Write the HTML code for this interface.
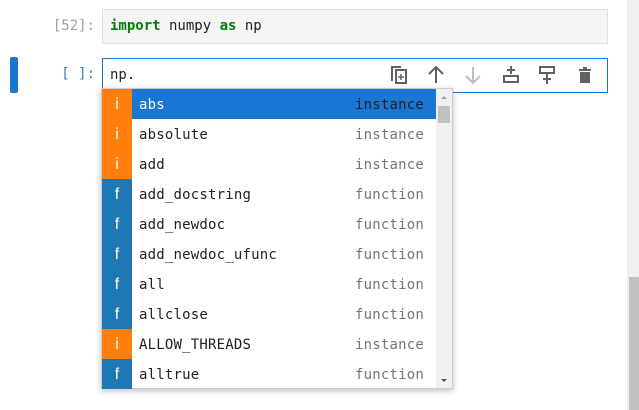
<!DOCTYPE html>
<html><head><meta charset="utf-8"><style>
*{margin:0;padding:0;box-sizing:border-box}
body{width:639px;height:410px;background:#fff;position:relative;overflow:hidden;font-family:"DejaVu Sans Mono","Liberation Mono",monospace;font-size:14px}
.abs{position:absolute}
.prompt{position:absolute;right:544px;color:#999;font-size:14px}
.box1{left:102px;top:9px;width:506px;height:35px;background:#f5f5f5;border:1px solid #e0e0e0}
.box2{left:102px;top:58px;width:506px;height:35px;background:#fff;border:1px solid #1976d2}
.code{position:absolute;left:7px;top:8px;color:#212121}
.kw{color:#008000;font-weight:bold}
.pop{left:101px;top:88px;width:352px;height:301px;background:#fff;border:1px solid #ccc;box-shadow:0 2px 6px rgba(0,0,0,.25)}
.row{position:absolute;left:0;width:335px;height:30px}
.b{position:absolute;left:0;top:0;width:30px;height:30px;color:#fff;text-align:center;line-height:32px;font-size:16px;font-family:"Liberation Sans",sans-serif}
.bi{background:#ff7f0e}.bf{background:#1f77b4}
.n{position:absolute;left:37px;top:0;line-height:32px;color:#212121;letter-spacing:0.2px}
.t{position:absolute;right:13px;top:0;line-height:32px;color:#757575;letter-spacing:0.2px}
.sel{background:#1976d2}.sel .n{color:#fff}.sel .t{color:#222}
</style></head><body>
<div class="prompt" style="top:18px;color:#9e9e9e">[52]:</div>
<div class="abs box1"><div class="code"><span class="kw">import</span> numpy <span class="kw">as</span> np</div></div>
<div class="abs" style="left:10px;top:57px;width:8px;height:36px;background:#1976d2;border-radius:2px"></div>
<div class="prompt" style="top:66px;color:#307fc1">[ ]:</div>
<div class="abs box2"><div class="code">np.</div></div>
<svg class="abs" style="left:389px;top:62px" width="220" height="26" viewBox="0 0 220 26">
<g fill="none" stroke="#616161" stroke-width="2">
<path d="M3 19V5h9"/><rect x="7" y="8" width="10" height="13"/><path d="M12 12v6M9 15h6" stroke-width="1.5"/>
<path d="M47 21V5M40 12l7-7 7 7"/>
<path d="M84 5v16M77 14l7 7 7-7" stroke="#bdbdbd"/>
<path d="M122 4v8M118 8h8"/><rect x="115" y="14" width="14" height="6"/>
<rect x="151" y="5" width="14" height="6"/><path d="M158 12v10M154 17h8"/>
</g>
<path d="M190 7h12v2h-12zM194 5h4v2h-4zM191 10h10v11h-10z" fill="#616161"/>
</svg>
<div class="abs pop">
<div class="row sel" style="top:0"><div class="b bi">i</div><div class="n">abs</div><div class="t">instance</div></div>
<div class="row" style="top:30px"><div class="b bi">i</div><div class="n">absolute</div><div class="t">instance</div></div>
<div class="row" style="top:60px"><div class="b bi">i</div><div class="n">add</div><div class="t">instance</div></div>
<div class="row" style="top:90px"><div class="b bf">f</div><div class="n">add_docstring</div><div class="t">function</div></div>
<div class="row" style="top:120px"><div class="b bf">f</div><div class="n">add_newdoc</div><div class="t">function</div></div>
<div class="row" style="top:150px"><div class="b bf">f</div><div class="n">add_newdoc_ufunc</div><div class="t">function</div></div>
<div class="row" style="top:180px"><div class="b bf">f</div><div class="n">all</div><div class="t">function</div></div>
<div class="row" style="top:210px"><div class="b bf">f</div><div class="n">allclose</div><div class="t">function</div></div>
<div class="row" style="top:240px"><div class="b bi">i</div><div class="n">ALLOW_THREADS</div><div class="t">instance</div></div>
<div class="row" style="top:270px"><div class="b bf">f</div><div class="n">alltrue</div><div class="t">function</div></div>
<div class="abs" style="left:334px;top:0;width:16px;height:299px;background:#f1f1f1"></div>
<div class="abs" style="left:336px;top:17px;width:12px;height:17px;background:#c1c1c1"></div>
<div class="abs" style="left:339px;top:7px;width:0;height:0;border-left:3px solid transparent;border-right:3px solid transparent;border-bottom:3px solid #a3a3a3"></div>
<div class="abs" style="left:339px;top:290px;width:0;height:0;border-left:3px solid transparent;border-right:3px solid transparent;border-top:3px solid #505050"></div>
</div>
<div class="abs" style="left:627px;top:0;width:12px;height:410px;background:#f0f0f0"></div>
<div class="abs" style="left:629px;top:277px;width:10px;height:133px;background:#c1c1c1"></div>
</body></html>
